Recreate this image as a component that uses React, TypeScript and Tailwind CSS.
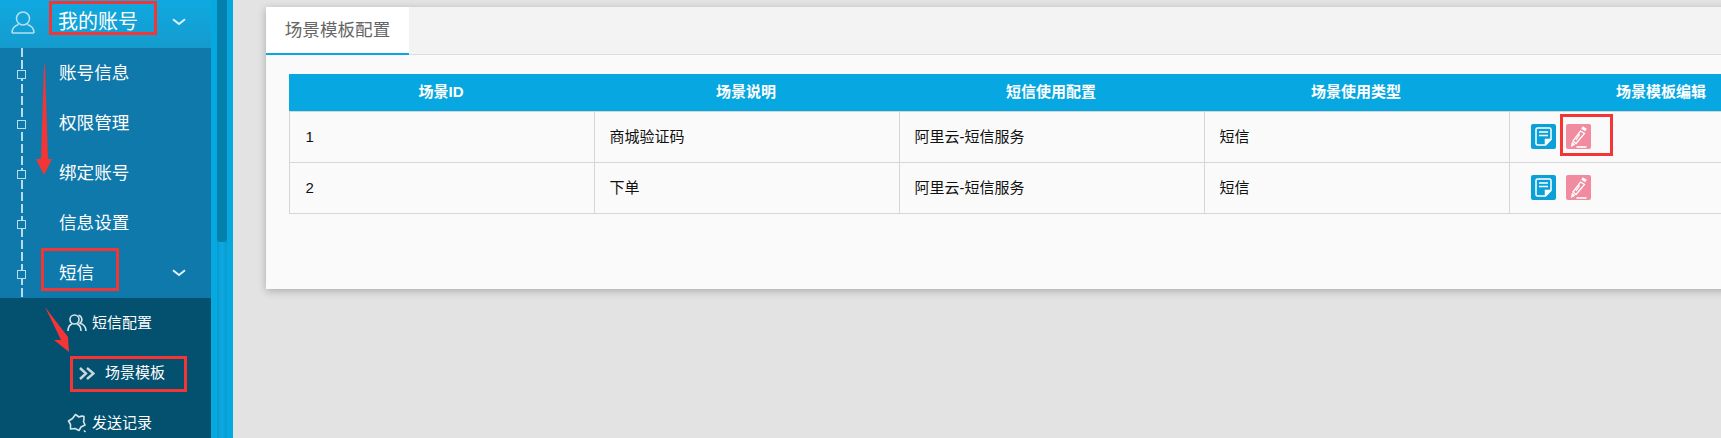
import React from 'react';

const font = { fontFamily: '"Liberation Sans", "Noto Sans CJK SC", sans-serif' };

const Chevron = () => (
  <svg width="14" height="8" viewBox="0 0 14 8" fill="none" className="shrink-0">
    <path d="M1 1.2 L7 6 L13 1.2" stroke="#dff2fa" strokeWidth="2" />
  </svg>
);

const Square = () => (
  <span className="absolute left-[17px] top-[22px] z-10 h-[9px] w-[9px] border-[1.5px] border-[#b5dff0] bg-[#0f79ab]" />
);

const SubItem = ({ label }: { label: string }) => (
  <div className="relative flex h-[50px] items-center pl-[59px] text-[17.6px] text-white">
    <Square />
    {label}
  </div>
);

const DocIcon = () => (
  <span className="flex h-[25px] w-[25px] items-center justify-center rounded-[2px] bg-[#0ca0d8]">
    <svg width="17" height="19" viewBox="0 0 17 19" fill="none" stroke="#ffffff" strokeWidth="1.5">
      <path d="M2.5 1 H14.5 Q16 1 16 2.5 V12.5 L10.5 18 H2.5 Q1 18 1 16.5 V2.5 Q1 1 2.5 1 Z" />
      <path d="M4 5 H13 M4 8.5 H13" />
      <path d="M16 12.5 H10.5 V18" fill="#ffffff" />
    </svg>
  </span>
);

const EditIcon = () => (
  <span className="flex h-[25px] w-[25px] items-center justify-center rounded-[2px] bg-[#f08ba0]">
    <svg width="17" height="22" viewBox="0 0 17 22" fill="none" stroke="#ffffff">
      <path d="M12 1.5 L16 4" strokeWidth="3" />
      <path d="M10.5 5 L14.5 7.5 L6 17.5 L3 15 Z" strokeWidth="1.3" />
      <path d="M9.6 8.4 L6 14" strokeWidth="1.2" />
      <path d="M2.2 16 L1.2 20.5 L5 18.5 Z" fill="#ffffff" strokeWidth="0.6" />
      <path d="M6.5 21 H16.5" strokeWidth="1.6" />
    </svg>
  </span>
);

const rows = [
  { id: '1', desc: '商城验证码', cfg: '阿里云-短信服务', type: '短信' },
  { id: '2', desc: '下单', cfg: '阿里云-短信服务', type: '短信' },
];

const headers = ['场景ID', '场景说明', '短信使用配置', '场景使用类型', '场景模板编辑'];

export default function App() {
  return (
    <div className="relative flex h-[438px] w-[1721px] overflow-hidden bg-[#e3e3e3]" style={font}>
      {/* Sidebar */}
      <div className="relative flex h-full w-[211px] shrink-0 flex-col bg-[#0f79ab]">
        <div className="flex h-[48px] shrink-0 items-center bg-gradient-to-b from-[#0ea9e1] to-[#159bcd] pb-[4px] pl-[11px] pr-[25px] text-[20px] text-white">
          <svg width="24" height="23" viewBox="0 0 24 23" fill="none" stroke="#b5e0f2" strokeWidth="1.5" className="shrink-0">
            <circle cx="12" cy="7.5" r="6.5" />
            <path d="M1 22 Q1 15.5 7.5 13.5 M23 22 Q23 15.5 16.5 13.5 M1 22 H23" />
          </svg>
          <span className="ml-[23px] flex-1">我的账号</span>
          <Chevron />
        </div>

        <div className="relative">
          <div className="absolute bottom-0 left-[21px] top-0 w-[1.5px] bg-[repeating-linear-gradient(to_bottom,#b5dff0_0px,#b5dff0_9px,transparent_9px,transparent_12px)]" />
          <SubItem label="账号信息" />
          <SubItem label="权限管理" />
          <SubItem label="绑定账号" />
          <SubItem label="信息设置" />
          <div className="relative flex h-[50px] items-center justify-between pl-[59px] pr-[25px] text-[17.6px] text-white">
            <Square />
            短信
            <Chevron />
          </div>
        </div>

        <div className="flex flex-1 flex-col bg-[#03506f] text-[15px] text-white">
          <div className="flex h-[50px] items-center pl-[67px]">
            <svg width="20" height="18" viewBox="0 0 20 18" fill="none" stroke="#d5e4ea" strokeWidth="1.6" className="shrink-0">
              <circle cx="7.5" cy="5.5" r="4.5" />
              <path d="M1 17 Q1 11.5 5 10 M14 17 Q14 11.5 10 10" />
              <path d="M11.5 1.2 A4.5 4.5 0 0 1 13 9.2 Q19 11 19 17" />
            </svg>
            <span className="ml-[5px]">短信配置</span>
          </div>
          <div className="flex h-[50px] items-center pl-[79px]">
            <svg width="16" height="13" viewBox="0 0 16 13" fill="none" stroke="#c9d6dc" strokeWidth="2.4" className="shrink-0">
              <path d="M1 1 L7 6.5 L1 12 M8 1 L14.5 6.5 L8 12" />
            </svg>
            <span className="ml-[10px]">场景模板</span>
          </div>
          <div className="flex h-[50px] items-center pl-[67px]">
            <svg width="20" height="20" viewBox="0 0 20 20" fill="none" stroke="#d5e4ea" strokeWidth="1.6" className="shrink-0">
              <path d="M8.5 1.5 L12 4 Q15 2.5 17 3.5 Q17 7 16.5 8.5 L18 12 L14 14 L12 17.5 L8 15.5 L3.5 16 L3.5 11.5 L1.5 8 L5.5 5.5 Z" strokeLinejoin="round" />
              <path d="M17 17.5 L18.5 19" />
            </svg>
            <span className="ml-[5px]">发送记录</span>
          </div>
        </div>
      </div>

      {/* Scrollbar */}
      <div className="flex h-full w-[22px] shrink-0 justify-center bg-[#06a8e0]">
        <div className="h-full w-[10px] bg-gradient-to-r from-[#0a9ad0] via-[#0ea9e3] to-[#0a9ad0]">
          <div className="h-[242px] w-[10px] rounded-b-[3px] bg-[#0580ad]" />
        </div>
      </div>

      {/* Main */}
      <div className="min-w-0 flex-1 pl-[33px] pt-[7px]">
        <div className="h-[282px] w-[1600px] bg-[#fafafa] shadow-[0_2px_8px_rgba(0,0,0,0.25)]">
          <div className="flex h-[48px] border-b border-[#dddddd] bg-[#f3f3f3]">
            <div className="flex h-[48px] w-[143px] items-center justify-center border-b-2 border-[#07a7e1] bg-white text-[17.6px] text-[#666666]">
              场景模板配置
            </div>
          </div>
          <div className="pl-[22.5px] pt-[19px]">
            <table className="w-[1526px] table-fixed border-collapse text-[15px] text-[#111111]">
              <thead>
                <tr className="h-[37px] bg-[#07a7e1] text-white">
                  {headers.map((h) => (
                    <th key={h} className="pr-[1px] font-bold">{h}</th>
                  ))}
                </tr>
              </thead>
              <tbody>
                {rows.map((r) => (
                  <tr key={r.id} className="h-[51px]">
                    <td className="border border-[#d6d6d6] pl-[16px] pt-[2px]">{r.id}</td>
                    <td className="border border-[#d6d6d6] pl-[15px] pt-[2px]">{r.desc}</td>
                    <td className="border border-[#d6d6d6] pl-[15px] pt-[2px]">{r.cfg}</td>
                    <td className="border border-[#d6d6d6] pl-[15px] pt-[2px]">{r.type}</td>
                    <td className="border border-[#d6d6d6] pl-[21px]">
                      <div className="flex items-center gap-[10px]">
                        <DocIcon />
                        <EditIcon />
                      </div>
                    </td>
                  </tr>
                ))}
              </tbody>
            </table>
          </div>
        </div>
      </div>

      {/* Red annotations drawn over the screenshot */}
      <div className="absolute left-[49px] top-[1px] h-[34px] w-[108px] border-[3px] border-[#f33535]" />
      <div className="absolute left-[41px] top-[248px] h-[43px] w-[78px] border-[3px] border-[#f33535]" />
      <div className="absolute left-[70px] top-[356px] h-[36px] w-[117px] border-[3px] border-[#f33535]" />
      <div className="absolute left-[1560px] top-[114px] h-[42px] w-[53px] border-[3px] border-[#f33535]" />
      <svg className="absolute left-[30px] top-[60px]" width="30" height="120" viewBox="0 0 30 120">
        <polygon points="14,5 15,5 18,99 22,99 14,115 6,99 11,99" fill="#f33535" />
      </svg>
      <svg className="absolute left-[40px] top-[300px]" width="40" height="60" viewBox="0 0 40 60">
        <polygon points="5,7 28,37 29,52 14,40 21,40" fill="#f33535" />
      </svg>
    </div>
  );
}
